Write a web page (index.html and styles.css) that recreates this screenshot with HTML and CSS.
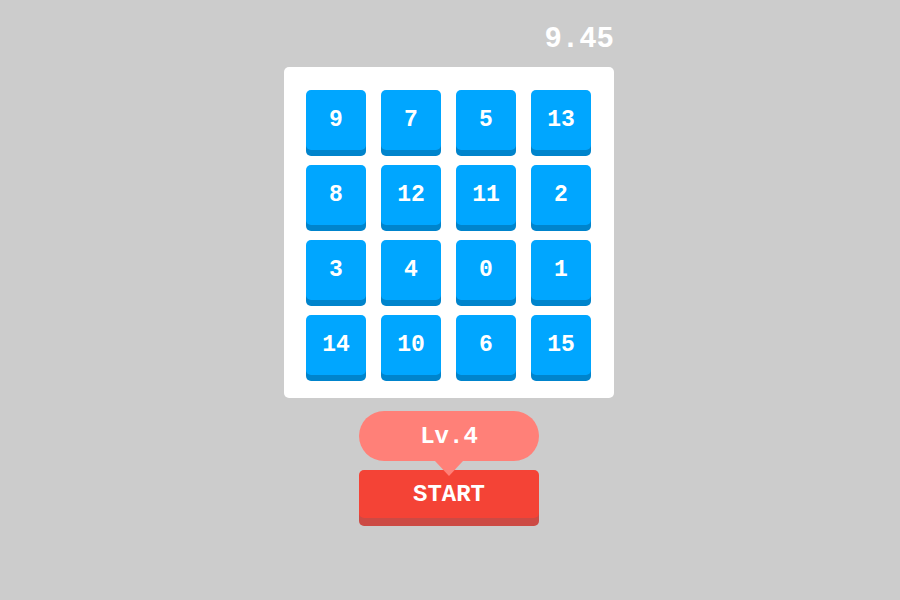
FILE: index.html
```html
<!DOCTYPE html>
<html>
<head>
<meta charset="utf-8">
<link rel="stylesheet" href="styles.css">
</head>
<body>
<div class="app">
  <div class="timer">9.45</div>
  <div class="board">
    <div class="tile">9</div>
    <div class="tile">7</div>
    <div class="tile">5</div>
    <div class="tile">13</div>
    <div class="tile">8</div>
    <div class="tile">12</div>
    <div class="tile">11</div>
    <div class="tile">2</div>
    <div class="tile">3</div>
    <div class="tile">4</div>
    <div class="tile">0</div>
    <div class="tile">1</div>
    <div class="tile">14</div>
    <div class="tile">10</div>
    <div class="tile">6</div>
    <div class="tile">15</div>
  </div>
  <div class="controls">
    <div class="level">Lv.4</div>
    <button class="start">START</button>
  </div>
</div>
</body>
</html>
```
FILE: styles.css
```css
html, body {
  margin: 0;
  padding: 0;
  background: #cccccc;
  height: 100%;
}
.app {
  width: 330px;
  margin-left: calc(50% - 166px);
  padding-top: 22px;
  display: flex;
  flex-direction: column;
  font-family: "Liberation Mono", "Courier New", monospace;
  font-weight: bold;
  color: #ffffff;
}
.timer {
  text-align: right;
  font-size: 29px;
  line-height: 36px;
  height: 36px;
  margin-bottom: 9px;
}
.board {
  background: #ffffff;
  border-radius: 5px;
  padding: 23px 23px 23px 22px;
  display: grid;
  grid-template-columns: repeat(4, 60px);
  grid-template-rows: repeat(4, 60px);
  gap: 15px;
}
.tile {
  background: #00a6ff;
  border-radius: 5px;
  box-shadow: 0 6px 0 #0084cc;
  display: flex;
  align-items: center;
  justify-content: center;
  font-size: 23px;
}
.controls {
  margin-top: 13px;
  display: flex;
  flex-direction: column;
  align-items: center;
}
.level {
  position: relative;
  z-index: 2;
  width: 180px;
  height: 50px;
  border-radius: 25px;
  background: #ff8078;
  display: flex;
  align-items: center;
  justify-content: center;
  font-size: 24px;
}
.level::after {
  content: "";
  position: absolute;
  left: 50%;
  top: 100%;
  margin-left: -14px;
  border-left: 14px solid transparent;
  border-right: 14px solid transparent;
  border-top: 15px solid #ff8078;
}
.start {
  margin-top: 9px;
  width: 180px;
  height: 48px;
  border: none;
  border-radius: 5px;
  background: #f44336;
  box-shadow: 0 8px 0 #cc4a44;
  color: #ffffff;
  font-family: inherit;
  font-weight: bold;
  font-size: 24px;
  padding: 0;
}
```
